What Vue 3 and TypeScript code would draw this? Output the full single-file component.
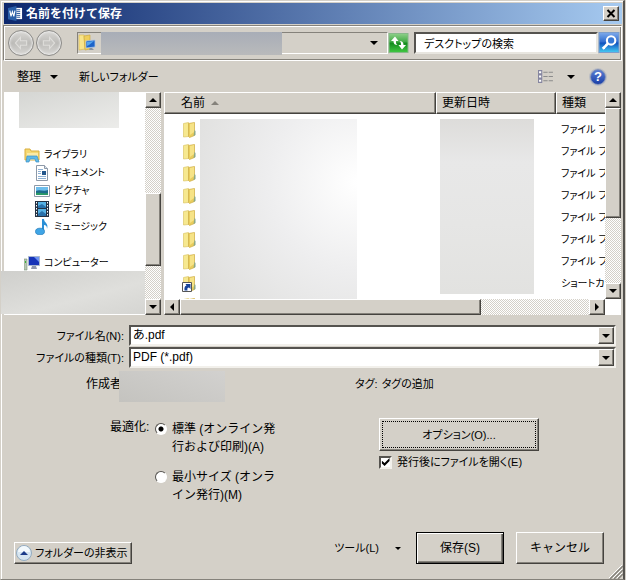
<script setup lang="ts">
import { ref } from 'vue'

interface LibraryItem {
  name: string
  kind: 'doc' | 'picture' | 'video' | 'music'
}

const libraries: LibraryItem[] = [
  { name: 'ドキュメント', kind: 'doc' },
  { name: 'ピクチャ', kind: 'picture' },
  { name: 'ビデオ', kind: 'video' },
  { name: 'ミュージック', kind: 'music' },
]

interface FileRow {
  id: number
  type: string
  shortcut: boolean
}

const rows: FileRow[] = Array.from({ length: 9 }, (_, i) => ({
  id: i,
  type: i === 8 ? '' : i === 7 ? 'ショートカ' : 'ファイル フ',
  shortcut: i === 7,
}))

const fileName = ref('あ.pdf')
const fileType = ref('pdf')
const quality = ref('standard')
const openAfter = ref(true)
const search = ref('デスクトップの検索')
</script>

<template>
  <main class="dialog">
    <header class="title-bar">
      <svg class="app-icon" viewBox="0 0 16 16" aria-hidden="true">
        <path d="M8 2h7v12H8z" fill="#fff" />
        <path d="M9 4h4M9 6h4M9 8h4M9 10h4M9 12h4" stroke="#2b579a" />
        <path d="M0 2l9-2v16l-9-2z" fill="#2b5fa8" />
        <path d="M2 5l1.200 6L4.700 6l1.500 5L7.400 5" fill="none" stroke="#fff" stroke-width="1.200" />
      </svg>
      <h1>名前を付けて保存</h1>
      <button class="raised close" type="button" aria-label="閉じる">
        <svg viewBox="0 0 10 9"><path d="M1.500 1l7 7M8.500 1l-7 7" stroke="#000" stroke-width="2" /></svg>
      </button>
    </header>

    <nav class="nav-bar">
      <div class="history">
        <button type="button" class="round" aria-label="戻る">
          <svg viewBox="0 0 16 16"><path d="M7.500 3L3 8l4.500 5v-3H13V6H7.500z" /></svg>
        </button>
        <button type="button" class="round" aria-label="進む">
          <svg viewBox="0 0 16 16"><path d="M8.500 3L13 8l-4.500 5v-3H3V6h5.500z" /></svg>
        </button>
      </div>
      <div class="address">
        <svg class="place-icon" viewBox="0 0 18 18" aria-hidden="true">
          <path d="M1 1h5l1 14-6 1z" fill="#f7e48b" stroke="#d8b74a" stroke-width=".6" />
          <path d="M6 2l6-1v14l-5 1z" fill="#efcf5c" stroke="#c9a437" stroke-width=".6" />
          <path d="M8 7l9-1v7l-9 1z" fill="#1c63c9" stroke="#aac4e4" stroke-width=".8" />
          <path d="M9 8l7-1-5 4-2 1z" fill="#55a6ee" />
          <path d="M12 14l2 0 2 2h-5z" fill="#8893a3" />
        </svg>
        <span class="hidden-path"></span>
        <button type="button" class="plain" aria-label="以前の場所">
          <svg class="arrow" viewBox="0 0 8 4"><path d="M0 0h8L4 4z" /></svg>
        </button>
      </div>
      <button type="button" class="plain refresh" aria-label="最新の情報に更新">
        <svg viewBox="0 0 20 20">
          <defs>
            <linearGradient id="green" x2="0" y2="1">
              <stop offset="0" stop-color="#8fd08a" /><stop offset=".45" stop-color="#3faa43" />
              <stop offset=".5" stop-color="#128a1c" /><stop offset="1" stop-color="#42c943" />
            </linearGradient>
          </defs>
          <rect x=".5" y=".5" width="19" height="19" fill="url(#green)" stroke="#86b889" />
          <path d="M6.500 3.500L2.500 8H5c0 3 1.500 4 4 4-1.500-1-1.500-2-1.500-4H10z" fill="#fff" />
          <path d="M13.500 16.500l4-4.500H15c0-3-1.500-4-4-4 1.500 1 1.500 2 1.500 4H10z" fill="#fff" />
        </svg>
      </button>
      <div class="search">
        <input v-model="search" type="text" aria-label="検索" />
        <button type="button" class="plain search-go" aria-label="検索する">
          <svg viewBox="0 0 20 20">
            <defs>
              <linearGradient id="blue" x2="0" y2="1">
                <stop offset="0" stop-color="#7fabeb" /><stop offset=".48" stop-color="#2e6bd0" />
                <stop offset=".52" stop-color="#0e50bd" /><stop offset="1" stop-color="#45cdf5" />
              </linearGradient>
            </defs>
            <rect x=".5" y=".5" width="19" height="19" fill="url(#blue)" stroke="#7b9dcc" />
            <circle cx="12" cy="8" r="4" fill="#3677d5" stroke="#fff" stroke-width="2" />
            <path d="M9 11l-5 5" stroke="#fff" stroke-width="2.500" />
          </svg>
        </button>
      </div>
    </nav>

    <div class="toolbar">
      <button type="button" class="plain organize">
        整理 <svg class="arrow" viewBox="0 0 8 4"><path d="M0 0h8L4 4z" /></svg>
      </button>
      <button type="button" class="plain kana">新しいフォルダー</button>
      <button type="button" class="plain view" aria-label="表示方法">
        <svg class="view-icon" viewBox="0 0 15 12">
          <g fill="#fff" stroke="#8585a0">
            <path d="M.5.5h3v3h-3zM.5 4.500h3v3h-3zM.5 8.500h3v3h-3z" />
          </g>
          <path d="M5 2h4M10 2h4M5 6h4M10 6h4M5 10h4M10 10h4" stroke="#8b8b8b" />
        </svg>
        <svg class="arrow" viewBox="0 0 8 4"><path d="M0 0h8L4 4z" /></svg>
      </button>
      <button type="button" class="help" aria-label="ヘルプ">?</button>
    </div>

    <section class="panes">
      <aside class="tree-pane">
        <div class="tree">
          <div class="hidden-favorites"></div>
          <ul>
            <li class="root">
              <svg viewBox="0 0 16 16">
                <path d="M1 2h5l1 2h8v9H1z" fill="#f5d974" stroke="#d9ae3c" />
                <path d="M3 6h11v7H3z" fill="#fbeaa6" />
                <path d="M2 15l1-6h10l2 6h-3l-1-3H6l-1 3z" fill="#5fb9e8" stroke="#3a91c5" stroke-width=".7" />
              </svg>
              ライブラリ
            </li>
            <li v-for="item in libraries" :key="item.name" class="leaf">
              <svg v-if="item.kind === 'doc'" viewBox="0 0 16 16">
                <path d="M2.500 .5h8l3 3v12h-11z" fill="#fff" stroke="#8d99a8" />
                <path d="M10.500 .5v3h3" fill="#dbe3ee" stroke="#8d99a8" />
                <path d="M4 4.500h5M4 6.500h3M4 8.500h3M4 11.500h8M4 13.500h8" stroke="#8fb1d4" />
                <path d="M8 6h4v4H8z" fill="#24578c" />
              </svg>
              <svg v-else-if="item.kind === 'picture'" viewBox="0 0 16 16">
                <path d="M.5 2.500h15v11H.5z" fill="#fff" stroke="#8d99a8" />
                <path d="M2 4h12v8H2z" fill="#6cbdec" />
                <path d="M2 8c4-2 7 1 12-1v5H2z" fill="#1c6a8c" />
                <path d="M2 10c4-1 7 1 12 0v2H2z" fill="#2a9a67" />
              </svg>
              <svg v-else-if="item.kind === 'video'" viewBox="0 0 16 16">
                <path d="M1 0h14v16H1z" fill="#243244" />
                <path d="M4 1h8v6H4zM4 8h8v7H4z" fill="#56b1e4" />
                <path d="M4 5l4-2 4 3v1H4zM4 13l4-3 4 3v2H4z" fill="#2870aa" />
                <path d="M2.500 1v15M13.500 1v15" stroke="#fff" stroke-dasharray="1.500 1.500" />
              </svg>
              <svg v-else viewBox="0 0 16 16">
                <path d="M8 0h2c0 4 5 4 3 10 0-3-1-4-3-4v7H8z" fill="#2a8fd6" />
                <ellipse cx="6" cy="12.500" rx="4.500" ry="3.300" fill="#3fa5e6" stroke="#2078b8" stroke-width=".7" />
              </svg>
              {{ item.name }}
            </li>
            <li class="root computer">
              <svg viewBox="0 0 16 16">
                <path d="M0 4h3v11H0z" fill="#b8c8b4" stroke="#789078" stroke-width=".6" />
                <path d="M1 6h1v2H1z" fill="#3bb33b" />
                <path d="M4.500 1.500h11v9h-11z" fill="#1633b8" stroke="#a8b6cf" />
                <path d="M10 2h5v5z" fill="#6d93f2" />
                <path d="M8 11h4l1 3H7z" fill="#8e97ad" />
              </svg>
              コンピューター
            </li>
          </ul>
          <div class="hidden-drives"></div>
        </div>
        <div class="scroll vertical tree-scroll">
          <button type="button" class="raised step" aria-label="上へ"><svg viewBox="0 0 8 4"><path d="M0 4h8L4 0z" /></svg></button>
          <div class="gap"></div>
          <div class="raised thumb"></div>
          <div class="rest"></div>
          <button type="button" class="raised step" aria-label="下へ"><svg viewBox="0 0 8 4"><path d="M0 0h8L4 4z" /></svg></button>
        </div>
      </aside>

      <div class="file-pane">
        <div class="files">
          <table>
            <colgroup><col class="c-name" /><col class="c-date" /><col class="c-type" /></colgroup>
            <thead>
              <tr>
                <th class="name-head">名前 <svg class="sort" viewBox="0 0 8 4"><path d="M0 4h8L4 0z" fill="#85827b" /></svg></th>
                <th>更新日時</th>
                <th>種類</th>
              </tr>
            </thead>
            <tbody>
              <tr v-for="row in rows" :key="row.id">
                <td class="name-cell">
                  <svg viewBox="0 0 16 16" aria-hidden="true">
                    <path d="M1.500 1.500l5-1v14l-5 .5z" fill="#f6e88f" stroke="#dcc668" stroke-width=".7" />
                    <path d="M6.500 1.500l6-1v13l-5 2-1-1z" fill="#e9cd5c" stroke="#cfae45" stroke-width=".7" />
                    <path d="M8 2l4-1v9l-4 3z" fill="#f6e387" />
                    <path d="M12.500 8l1 1v4l-2 1z" fill="#8aa887" />
                    <g v-if="row.shortcut">
                      <path d="M.5 6.500h9v9h-9z" fill="#fff" stroke="#555" />
                      <path d="M2.500 14.500c-.5-3 .5-4.500 2-5L3.500 8H8.500v5L7 11.500c-1.500 0-2 1-1.500 3z" fill="#17439b" />
                    </g>
                  </svg>
                </td>
                <td></td>
                <td>{{ row.type }}</td>
              </tr>
            </tbody>
          </table>
          <div class="hidden-names"></div>
          <div class="hidden-dates"></div>
        </div>
        <div class="scroll vertical file-scroll">
          <button type="button" class="raised step" aria-label="上へ"><svg viewBox="0 0 8 4"><path d="M0 4h8L4 0z" /></svg></button>
          <div class="raised thumb"></div>
          <div class="rest"></div>
          <button type="button" class="raised step" aria-label="下へ"><svg viewBox="0 0 8 4"><path d="M0 0h8L4 4z" /></svg></button>
        </div>
        <div class="scroll horizontal">
          <button type="button" class="raised step" aria-label="左へ"><svg class="side" viewBox="0 0 4 8"><path d="M4 0v8L0 4z" /></svg></button>
          <div class="raised thumb"></div>
          <div class="rest"></div>
          <button type="button" class="raised step" aria-label="右へ"><svg class="side" viewBox="0 0 4 8"><path d="M0 0v8l4-4z" /></svg></button>
        </div>
        <div class="corner"></div>
      </div>
    </section>

    <form class="form" @submit.prevent>
      <div class="fields">
        <label class="kana" for="file-name">ファイル名(N):</label>
        <div class="combo">
          <input id="file-name" v-model="fileName" type="text" />
          <button type="button" class="raised drop" aria-label="履歴"><svg class="arrow" viewBox="0 0 8 4"><path d="M0 0h8L4 4z" /></svg></button>
        </div>
        <label class="kana" for="file-type">ファイルの種類(T):</label>
        <div class="combo">
          <select id="file-type" v-model="fileType">
            <option value="pdf">PDF (*.pdf)</option>
          </select>
          <span class="raised drop" aria-hidden="true"><svg class="arrow" viewBox="0 0 8 4"><path d="M0 0h8L4 4z" /></svg></span>
        </div>
      </div>

      <div class="meta">
        <div class="author"><span class="author-label">作成者</span><span class="hidden-author"></span></div>
        <div class="tags kana"><span>タグ:</span><a href="#">タグの追加</a></div>
      </div>

      <div class="settings">
        <fieldset class="quality">
          <legend>最適化:</legend>
          <div class="choices">
            <label><input v-model="quality" type="radio" name="quality" value="standard" /><span>標準 (オンライン発行および印刷)(A)</span></label>
            <label><input v-model="quality" type="radio" name="quality" value="minimum" /><span>最小サイズ (オンライン発行)(M)</span></label>
          </div>
        </fieldset>
        <div class="output kana">
          <button type="button" class="raised options"><span>オプション(O)...</span></button>
          <label class="check"><input v-model="openAfter" type="checkbox" /><span>発行後にファイルを開く(E)</span></label>
        </div>
      </div>

      <footer class="actions">
        <button type="button" class="raised hide-folders kana">
          <svg viewBox="0 0 16 16">
            <circle cx="8" cy="8" r="7.500" fill="#d7e6f1" stroke="#93abc0" />
            <path d="M2 7a6 6 0 0 1 12 0z" fill="#f3f9fd" />
            <path d="M4 10h8L8 6z" fill="#1d3c8a" />
          </svg>
          フォルダーの非表示
        </button>
        <button type="button" class="plain tools kana">ツール(L)<svg viewBox="0 0 6 3"><path d="M0 0h6L3 3z" /></svg></button>
        <button type="submit" class="raised main-button save">保存(S)</button>
        <button type="button" class="raised main-button">キャンセル</button>
      </footer>
    </form>
    <svg class="grip" viewBox="0 0 14 14" aria-hidden="true">
      <path d="M1 14L14 1M5 14l9-9M9 14l5-5" stroke="#85827b" stroke-width="1.500" />
      <path d="M0 13L13 0M4 13l9-9M8 13l5-5" stroke="#fff" />
    </svg>
  </main>
</template>

<style>
body {
  background: #d4d0c8;
}
</style>

<style scoped>
* {
  box-sizing: border-box;
}
.dialog {
  position: relative;
  display: flex;
  flex-direction: column;
  min-height: 100vh;
  margin-right: 1px;
  padding: 2px 1px 0 2px;
  border: 1px solid #d4d0c8;
  border-right: 2px solid #55534f;
  border-bottom: 1px solid #85827b;
  background: #d4d0c8;
  box-shadow: inset 1px 1px #fff;
  color: #000;
  font-family: "Liberation Sans", "Noto Sans CJK JP", sans-serif;
  font-size: 12px;
  line-height: 18px;
  font-feature-settings: "palt";
}
button,
input,
select {
  margin: 0;
  padding: 0;
  color: inherit;
  font: inherit;
  font-feature-settings: inherit;
}
svg {
  display: block;
  flex: none;
}
.kana {
  font-size: 11px;
}
.raised {
  border: 1px solid;
  border-color: #fff #45433f #45433f #fff;
  border-radius: 0;
  background: #d4d0c8;
  box-shadow: inset -1px -1px #85827b;
}
.plain {
  display: flex;
  align-items: center;
  border: 0;
  background: none;
}
.arrow {
  width: 8px;
  height: 4px;
}

.title-bar {
  display: flex;
  align-items: center;
  height: 21px;
  margin-left: 1px;
  padding: 0 3px 0 4px;
  background: linear-gradient(90deg, #0c276c, #a6caf0);
  color: #fff;
}
.app-icon {
  width: 15px;
  height: 15px;
  margin-right: 3px;
}
h1 {
  flex: 1;
  margin: 0;
  font-size: 12px;
  font-weight: 700;
  font-feature-settings: normal;
}
.close {
  display: grid;
  place-items: center;
  width: 16px;
  height: 15px;
}
.close svg {
  width: 10px;
  height: 9px;
}

.nav-bar {
  display: flex;
  align-items: center;
  height: 36px;
  margin-top: 1px;
  padding: 0 1px 0 4px;
  border: 1px solid;
  border-color: #85827b #fff #fff #85827b;
  box-shadow: inset 1px 1px #fff, inset -1px -1px #85827b;
}
.history {
  display: flex;
  gap: 2px;
  margin-right: 15px;
}
.round {
  display: grid;
  place-items: center;
  width: 26px;
  height: 26px;
  border: 1px solid #8c8b88;
  border-radius: 50%;
  background: linear-gradient(#d9d8d5, #bcbbb8 50%, #d8d7d4);
  box-shadow: inset 0 0 2px 1px #eee;
}
.round svg {
  width: 18px;
  height: 18px;
  fill: #c6c5c2;
  stroke: #dedddA;
}
.address {
  display: flex;
  flex: 1;
  align-items: center;
  height: 22px;
  padding-right: 9px;
  border: 1px solid;
  border-color: #85827b #fff #fff #85827b;
}
.place-icon {
  width: 18px;
  height: 18px;
}
.hidden-path {
  flex: 0 1 181px;
  height: 23px;
  margin: 0 auto 0 5px;
  background: linear-gradient(#a8adb7, #b9babb);
}
.refresh {
  width: 21px;
  height: 20px;
}
.refresh svg,
.search-go svg {
  width: 100%;
  height: 100%;
}
.search {
  display: flex;
  width: 206px;
  margin-left: 5px;
}
.search input {
  flex: 1;
  min-width: 0;
  height: 22px;
  padding: 0 8px;
  border: 2px solid;
  border-color: #55534f #e8e6e0 #e8e6e0 #55534f;
  background: #fff;
  font-size: 11px;
}
.search-go {
  width: 22px;
  height: 21px;
}

.toolbar {
  display: flex;
  align-items: center;
  height: 31px;
  padding: 0 16px 0 14px;
}
.organize {
  gap: 9px;
  margin-right: 21px;
}
.view {
  gap: 13px;
  margin-left: auto;
}
.view-icon {
  width: 16px;
  height: 13px;
}
.help {
  width: 16px;
  height: 16px;
  margin-left: 15px;
  border: 1px solid #8090b8;
  border-radius: 50%;
  background: linear-gradient(#5b7fd2, #1a3fa8);
  box-shadow: 0 0 0 1px #b9bcc4;
  color: #fff;
  font-size: 13px;
  font-weight: 700;
  line-height: 14px;
}

.panes {
  display: flex;
  gap: 3px;
  height: 223px;
  margin-right: 1px;
}
.tree-pane {
  display: flex;
  flex: none;
  width: 157px;
  margin-left: 1px;
}
.tree {
  position: relative;
  flex: 1;
  background: #fff;
}
.hidden-favorites {
  width: 100px;
  height: 36px;
  margin-left: 15px;
  background: linear-gradient(165deg, #d5d6d3, #ececea);
}
ul {
  margin: 0;
  padding: 18px 0 0;
  list-style: none;
}
li {
  display: flex;
  align-items: center;
  gap: 4px;
  height: 18px;
  font-size: 10px;
  white-space: nowrap;
}
li svg {
  width: 16px;
  height: 16px;
}
.root {
  padding-left: 20px;
}
.leaf {
  padding-left: 30px;
}
.computer {
  margin-top: 18px;
}
.hidden-drives {
  position: absolute;
  right: 0;
  bottom: 1px;
  left: -3px;
  height: 43px;
  background: linear-gradient(165deg, #cfcfcc, #dfdfdc 60%, #d5d5d2);
}

.scroll {
  display: flex;
  background: repeating-conic-gradient(#d4d0c8 0 25%, #fff 0 50%) 0 0 / 2px 2px;
}
.vertical {
  flex-direction: column;
  width: 16px;
}
.step {
  display: grid;
  flex: none;
  place-items: center;
  width: 16px;
  height: 16px;
}
.step svg {
  width: 8px;
  height: 4px;
}
.step .side {
  width: 4px;
  height: 8px;
}
.tree-scroll .gap {
  flex: 86;
}
.tree-scroll .thumb {
  flex: 72;
}
.tree-scroll .rest {
  flex: 33;
}
.file-scroll .thumb {
  flex: 109;
}
.file-scroll .rest {
  flex: 66;
}
.horizontal .thumb {
  flex: 300;
}
.horizontal .rest {
  flex: 109;
}

.file-pane {
  display: grid;
  flex: 1;
  grid-template-rows: minmax(0, 1fr) 16px;
  grid-template-columns: minmax(0, 1fr) 16px;
  min-width: 0;
  background: #fff;
}
.files {
  position: relative;
  overflow: hidden;
}
table {
  width: 100%;
  border-spacing: 0;
  table-layout: fixed;
}
.c-name {
  width: 272px;
}
.c-date {
  width: 120px;
}
th {
  height: 22px;
  padding: 0 0 0 5px;
  border: 1px solid;
  border-color: #fff #45433f #45433f #fff;
  background: #d4d0c8;
  box-shadow: inset -1px -1px #85827b;
  font-weight: 400;
  line-height: 18px;
  text-align: left;
  white-space: nowrap;
}
th:last-child {
  border-right: 0;
  box-shadow: inset 0 -1px #85827b;
}
.name-head {
  padding-left: 16px;
}
.sort {
  display: inline-block;
  width: 8px;
  height: 4px;
  margin-left: 3px;
  vertical-align: 2px;
}
tbody::before {
  display: block;
  height: 5px;
  content: "";
}
td {
  height: 22px;
  padding: 0 0 0 5px;
  font-size: 10px;
  line-height: 18px;
  white-space: nowrap;
}
.name-cell {
  padding-left: 18px;
}
.name-cell svg {
  width: 16px;
  height: 16px;
}
.hidden-names,
.hidden-dates {
  position: absolute;
  top: 27px;
}
.hidden-names {
  bottom: 0;
  left: 36px;
  width: 157px;
  background: radial-gradient(circle at 100% 35%, #fff, #eeeeef 45%, #dddddb);
}
.hidden-dates {
  bottom: 5px;
  left: 276px;
  width: 94px;
  background: linear-gradient(#dddcda, #e8e8e8 25%, #e6e6e5 60%, #e2e2e0);
}

.form {
  display: flex;
  flex: 1;
  flex-direction: column;
}
.fields {
  display: grid;
  grid-template-columns: 121px minmax(0, 1fr);
  gap: 1px 5px;
  align-items: center;
  padding: 10px 6px 0 0;
}
.fields label {
  text-align: right;
}
.combo {
  position: relative;
  height: 21px;
  border: 2px solid;
  border-color: #55534f #f2f0eb #f2f0eb #55534f;
  background: #fff;
}
.combo input,
.combo select {
  display: block;
  width: 100%;
  height: 17px;
  padding: 0 18px 0 2px;
  border: 0;
  appearance: none;
  background: none;
  line-height: 17px;
}
.drop {
  position: absolute;
  top: 0;
  right: 0;
  display: grid;
  place-items: center;
  width: 16px;
  height: 17px;
  pointer-events: none;
}
.meta {
  display: flex;
  padding: 3px 0 0 83px;
}
.author {
  display: flex;
  width: 269px;
}
.author-label {
  width: 33px;
  padding-top: 4px;
  white-space: nowrap;
}
.hidden-author {
  width: 106px;
  height: 31px;
  background: linear-gradient(200deg, #d2d1cf, #c4c3bf);
}
.tags {
  display: flex;
  gap: 4px;
  padding-top: 4px;
}
a {
  color: inherit;
  text-decoration: none;
}
.settings {
  display: flex;
  padding: 16px 0 0 107px;
}
.quality {
  display: flex;
  width: 269px;
  margin: 0;
  padding: 0;
  border: 0;
}
legend {
  float: left;
  width: 45px;
  padding: 0;
}
.choices {
  display: flex;
  flex-direction: column;
  gap: 12px;
  width: 128px;
  padding-top: 2px;
  font-feature-settings: normal;
}
.choices label {
  display: flex;
  gap: 5px;
}
input[type="radio"] {
  flex: none;
  width: 12px;
  height: 12px;
  margin-top: 3px;
  border: 1px solid;
  border-color: #55534f #fff #fff #55534f;
  border-radius: 50%;
  appearance: none;
  background: #fff;
}
input[type="radio"]:checked {
  background: radial-gradient(circle, #000 2px, #fff 3px);
}
.options {
  display: block;
  width: 160px;
  height: 33px;
  padding: 2px;
}
.options span {
  display: grid;
  place-items: center;
  height: 100%;
  border: 1px dotted #000;
}
.check {
  display: flex;
  align-items: center;
  gap: 5px;
  margin-top: 2px;
}
input[type="checkbox"] {
  width: 13px;
  height: 13px;
  border: 2px solid;
  border-color: #55534f #f2f0eb #f2f0eb #55534f;
  appearance: none;
  background: #fff;
}
input[type="checkbox"]:checked::before {
  display: block;
  width: 9px;
  height: 9px;
  background: #000;
  clip-path: polygon(10% 35%, 40% 62%, 95% 5%, 95% 40%, 40% 95%, 10% 68%);
  content: "";
}
.actions {
  display: flex;
  align-items: center;
  margin-top: auto;
  padding: 0 18px 15px 11px;
}
.hide-folders {
  display: flex;
  align-items: center;
  gap: 3px;
  height: 22px;
  margin: 10px auto 0 0;
  padding: 0 3px 0 1px;
}
.hide-folders svg {
  width: 16px;
  height: 16px;
}
.tools {
  gap: 16px;
  margin-right: 15px;
}
.tools svg {
  width: 6px;
  height: 3px;
}
.main-button {
  width: 88px;
  height: 32px;
  font-feature-settings: normal;
}
.save {
  margin-right: 12px;
  border-color: #000;
  box-shadow: inset 1px 1px #fff, inset -1px -1px #55534f, inset -2px -2px #85827b;
}
.grip {
  position: absolute;
  right: 0;
  bottom: 0;
  width: 14px;
  height: 14px;
}
</style>
